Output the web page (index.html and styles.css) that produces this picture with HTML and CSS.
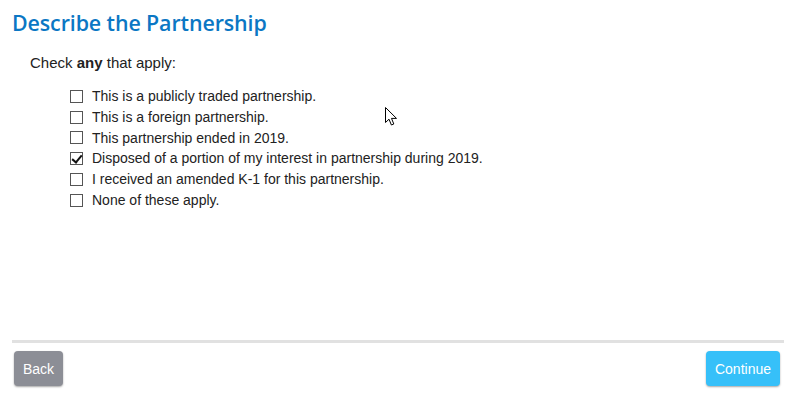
FILE: index.html
```html
<!DOCTYPE html>
<html>
<head>
    <title>Describe the Partnership</title>
    <link rel="stylesheet" href="styles.css">
</head>
<body>
    <div class="page">
        <h1 class="title">Describe the Partnership</h1>
        <p class="prompt">Check <b>any</b> that apply:</p>

        <ul class="options">
            <li><label><input type="checkbox"> This is a publicly traded partnership.</label></li>
            <li><label><input type="checkbox"> This is a foreign partnership.</label></li>
            <li><label><input type="checkbox"> This partnership ended in 2019.</label></li>
            <li><label><input type="checkbox" checked> Disposed of a portion of my interest in partnership during 2019.</label></li>
            <li><label><input type="checkbox"> I received an amended K-1 for this partnership.</label></li>
            <li><label><input type="checkbox"> None of these apply.</label></li>
        </ul>

        <div class="footer">
            <button class="btn btn-back">Back</button>
            <button class="btn btn-continue">Continue</button>
        </div>
    </div>

    <!-- mouse pointer from the screenshot -->
    <svg class="cursor" width="13" height="20" viewBox="0 0 13 20">
        <path d="M0.5 0.5 L0.5 15.5 L4 12.2 L6.4 18 L8.8 17 L6.5 11.4 L11.5 11.4 Z" fill="#fff" stroke="#000" stroke-width="1"/>
    </svg>
</body>
</html>
```

FILE: styles.css
```css
body {
    margin: 0;
    padding: 0;
    font-family: "Liberation Sans", Arial, sans-serif;
    color: #222;
    background-color: #fff;
}

.page {
    height: 408px;
    display: flex;
    flex-direction: column;
    padding: 0 2px 0 12px;
    box-sizing: border-box;
}

.title {
    margin: 8px 0 0 0;
    font-family: "Open Sans", sans-serif;
    font-weight: 600;
    font-size: 21.4px;
    line-height: 30px;
    color: #0b77c4;
    letter-spacing: -0.1px;
}

.prompt {
    margin: 16px 0 0 18px;
    font-size: 15px;
    line-height: 18px;
}

.options {
    list-style: none;
    margin: 14px 0 0 57px;
    padding: 0;
    font-size: 14px;
}

.options li {
    height: 20.8px;
    line-height: 20.8px;
}

.options label {
    display: flex;
    align-items: center;
}

.options input {
    appearance: none;
    width: 13px;
    height: 13px;
    margin: 0 9px 0 1px;
    border: 1px solid #555;
    box-sizing: border-box;
    background: #fff;
    position: relative;
}

.options input:checked::after {
    content: "";
    position: absolute;
    left: 3px;
    top: 0px;
    width: 4px;
    height: 8px;
    border: solid #111;
    border-width: 0 2px 2px 0;
    transform: rotate(40deg);
}

.footer {
    margin-top: auto;
    margin-bottom: 22px;
    border-top: 3px solid #e1e1e1;
    padding: 8px 4px 0 2px;
    display: flex;
    justify-content: space-between;
}

.btn {
    height: 35px;
    border: none;
    border-radius: 4px;
    color: #fff;
    font-family: "Liberation Sans", Arial, sans-serif;
    font-size: 14px;
    padding: 0 9px;
    box-shadow: 0 1px 2px rgba(0, 0, 0, 0.35);
    cursor: pointer;
}

.btn-back {
    background-color: #8c8e96;
}

.btn-continue {
    background-color: #36c0f9;
}

.cursor {
    position: absolute;
    left: 385px;
    top: 107px;
}
```
